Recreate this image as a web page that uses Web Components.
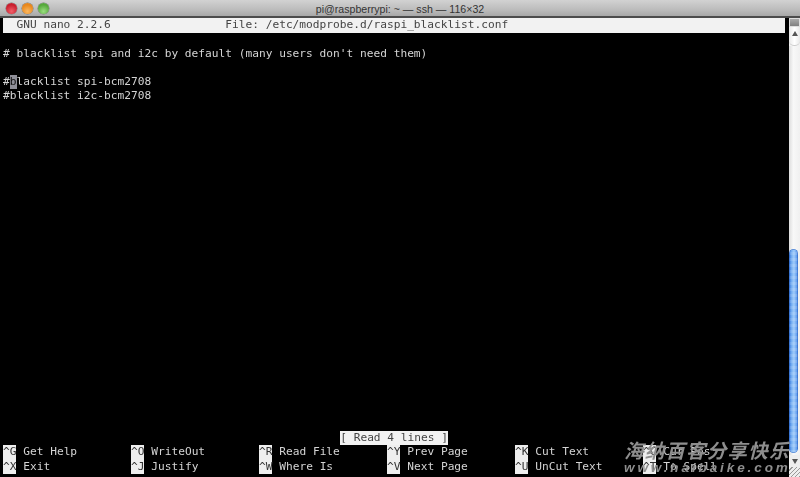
<!doctype html>
<html><head><meta charset="utf-8"><style>
html,body{margin:0;padding:0;background:#000;overflow:hidden}
</style></head><body>
<terminal-window>
  <window-titlebar slot="title">pi@raspberrypi: ~ — ssh — 116×32</window-titlebar>
  <term-screen slot="screen">
    <term-row inverse>  GNU nano 2.2.6                 File: /etc/modprobe.d/raspi_blacklist.conf</term-row>
    <term-row></term-row>
    <term-row># blacklist spi and i2c by default (many users don't need them)</term-row>
    <term-row></term-row>
    <term-row>#<term-cursor>b</term-cursor>lacklist spi-bcm2708</term-row>
    <term-row>#blacklist i2c-bcm2708</term-row>
    <term-spacer></term-spacer>
    <term-status>[ Read 4 lines ]</term-status>
    <key-bar>
      <nano-key k="^G">Get Help</nano-key><nano-key k="^O">WriteOut</nano-key><nano-key k="^R">Read File</nano-key><nano-key k="^Y">Prev Page</nano-key><nano-key k="^K">Cut Text</nano-key><nano-key k="^C">Cur Pos</nano-key>
      <nano-key k="^X">Exit</nano-key><nano-key k="^J">Justify</nano-key><nano-key k="^W">Where Is</nano-key><nano-key k="^V">Next Page</nano-key><nano-key k="^U">UnCut Text</nano-key><nano-key k="^T">To Spell</nano-key>
    </key-bar>
  </term-screen>
  <term-scrollbar slot="scroll"></term-scrollbar>
  <water-mark slot="mark"></water-mark>
</terminal-window>
<script>
function def(name, html){
  customElements.define(name, class extends HTMLElement{
    constructor(){super();this.attachShadow({mode:'open'}).innerHTML=html;}
    connectedCallback(){
      const k=this.shadowRoot.querySelector('[data-k]');
      if(k) k.textContent=this.getAttribute('k');
    }
  });
}
const MONO='"DejaVu Sans Mono","Liberation Mono",monospace';
def('terminal-window',`<style>
:host{display:grid;grid-template-rows:18px 459px;grid-template-columns:1fr;width:800px;height:477px;position:relative;overflow:hidden;background:#000}
.body{display:flex;min-height:0}
.scr{flex:1;min-width:0}
</style>
<slot name="title"></slot>
<div class="body"><div class="scr"><slot name="screen"></slot></div><slot name="scroll"></slot></div>
<slot name="mark"></slot>`);
def('window-titlebar',`<style>
:host{display:flex;align-items:center;height:18px;box-sizing:border-box;background:linear-gradient(#d2d2d2,#bcbcbc 60%,#a8a8a8);border-bottom:2px solid #4c4c4c;position:relative;font:10.6px "Liberation Sans",Arial,sans-serif;color:#333}
.lights{display:flex;gap:5px;position:absolute;left:5.5px;top:2.5px}
.t{flex:1;text-align:center;padding-top:2px}
</style>
<div class="lights"><traffic-light style="--c:#f2606a;--d:#c81e2e"></traffic-light><traffic-light style="--c:#fbb860;--d:#e8871c"></traffic-light><traffic-light style="--c:#9ade80;--d:#56a83c"></traffic-light></div>
<div class="t"><slot></slot></div>`);
def('traffic-light',`<style>
:host{display:block;width:11px;height:11px;border-radius:50%;background:radial-gradient(circle at 50% 75%,var(--c) 0,var(--d) 65%,var(--d) 100%);box-shadow:0 0 0 .5px #777}
</style>`);
def('term-screen',`<style>
:host{display:flex;flex-direction:column;box-sizing:border-box;height:459px;padding:.3px 0 3.2px 3px;background:#000;color:#d4d4d4;font:11.2px/14.23px ${MONO};white-space:pre;filter:blur(.4px)}
</style><slot></slot>`);
def('term-row',`<style>
:host{display:block;height:14.23px;line-height:14.23px}
:host([inverse]){background:#f2f2f2;color:#444;margin-right:4px}
</style><slot></slot>`);
def('term-cursor',`<style>:host{display:inline-block;background:#8f8f98;color:#111}</style><slot></slot>`);
def('term-spacer',`<style>:host{display:block;flex:1}</style>`);
def('term-status',`<style>
:host{display:block;align-self:flex-start;margin:0 0 0 337.2px;background:#f2f2f2;color:#444;height:14.23px}
</style><slot></slot>`);
def('key-bar',`<style>
:host{display:grid;grid-template-columns:repeat(6,128px);grid-auto-rows:14.23px}
</style><slot></slot>`);
def('nano-key',`<style>
:host{display:flex;height:14.23px}
.k{background:#eee;color:#333}
.l{padding-left:6.74px}
</style><span class="k" data-k></span><span class="l"><slot></slot></span>`);
def('term-scrollbar',`<style>
:host{display:flex;flex-direction:column;width:11px;box-sizing:border-box;background:#f1f1f1;height:459px;position:relative}
.split{height:9px;background:linear-gradient(#aaa,#808080);border:1px solid #ddd;box-sizing:border-box}
.up{height:19px;padding-top:4px;box-sizing:border-box;display:flex;justify-content:center;background:linear-gradient(90deg,#e8e8e8,#fff,#e8e8e8);border-bottom:1px solid #ccc;border-radius:0 0 5px 5px}
.tri{width:0;height:0;border:3px solid transparent;border-top:0;border-bottom:5px solid #555}
.track{flex:1;display:flex;flex-direction:column;background:linear-gradient(90deg,#ddd,#f8f8f8 40%,#f0f0f0)}
.gap{height:203px}
.thumb{height:204px;width:9px;border-radius:5px;background:repeating-linear-gradient(#0000 0 3px,#ffffff22 3px 6px),linear-gradient(90deg,#2f72d8,#78b0f2 30%,#a0ccfa 55%,#4a8ae8);box-shadow:inset 0 0 0 .5px #2a62c0}
.dn{height:12px;display:flex;justify-content:center;align-items:center;background:#eee}
.dn .tri{border:3px solid transparent;border-bottom:0;border-top:5px solid #555}
.grip{height:10px;background:repeating-linear-gradient(135deg,#eee 0 2px,#999 2px 3px)}
</style>
<div class="split"></div><div class="up"><div class="tri"></div></div>
<div class="track"><div class="gap"></div><div class="thumb"></div></div>
<div class="dn"><div class="tri"></div></div><div class="grip"></div>`);
def('water-mark',`<style>
:host{position:absolute;left:624px;top:439px;width:170px;display:flex;flex-direction:column;color:#8e8e8e;filter:blur(.3px);pointer-events:none}
.a{font:italic 700 19.5px/22px "Noto Sans CJK SC",sans-serif;letter-spacing:1.2px;white-space:nowrap}
.b{font:italic 700 13.5px/14px "Liberation Sans",sans-serif;letter-spacing:2.9px;white-space:nowrap}
</style><div class="a">海纳百客分享快乐</div><div class="b">www.haibaike.com</div>`);
</script>
</body></html>
